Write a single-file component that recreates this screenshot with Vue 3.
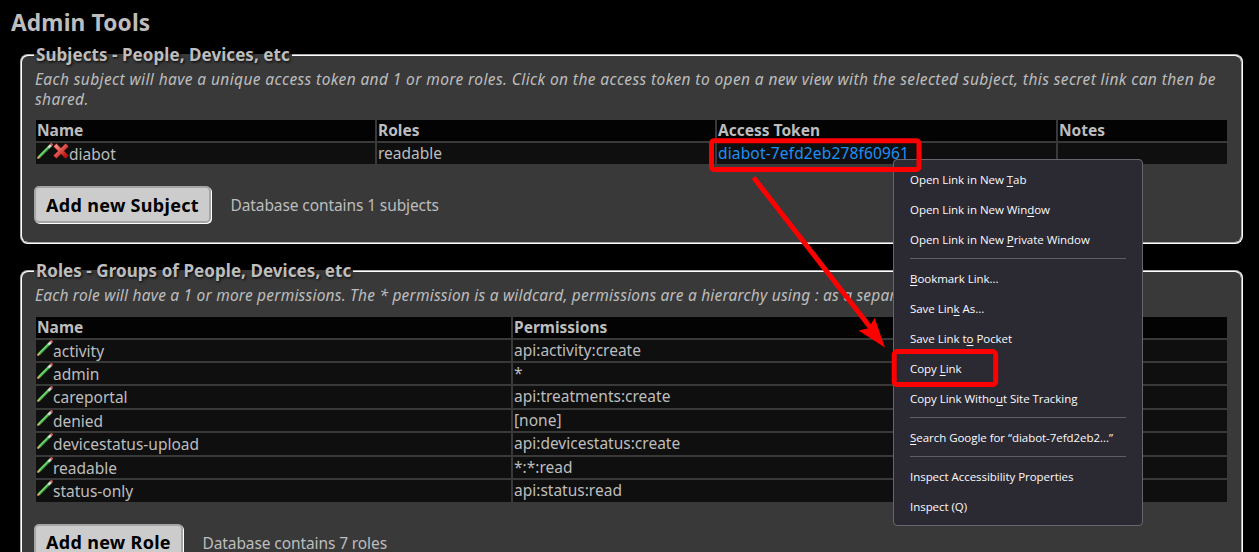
<script setup>
const subjectCols = ['Name', 'Roles', 'Access Token', 'Notes']
const roles = [
  ['activity', 'api:activity:create'],
  ['admin', '*'],
  ['careportal', 'api:treatments:create'],
  ['denied', '[none]'],
  ['devicestatus-upload', 'api:devicestatus:create'],
  ['readable', '*:*:read'],
  ['status-only', 'api:status:read'],
]
// Each menu label is [before, access key, after].
const menu = [
  [
    ['Open Link in New ', 'T', 'ab'],
    ['Open Link in New Win', 'd', 'ow'],
    ['Open Link in New ', 'P', 'rivate Window'],
  ],
  [
    ['', 'B', 'ookmark Link...'],
    ['Save Lin', 'k', ' As...'],
    ['Save Link t', 'o', ' Pocket'],
    ['Copy ', 'L', 'ink'],
    ['Copy Link Witho', 'u', 't Site Tracking'],
  ],
  [['', 'S', 'earch Google for “diabot-7efd2eb2...”']],
  [
    ['Inspect Accessibility Properties', '', ''],
    ['Inspect (Q)', '', ''],
  ],
]
</script>

<template>
  <div class="page">
    <svg class="defs" width="0" height="0">
      <defs>
        <linearGradient id="xg" x1="0" y1="0" x2="1" y2="1">
          <stop offset="0" stop-color="#f08a80" />
          <stop offset="1" stop-color="#c01410" />
        </linearGradient>
        <symbol id="pencil" viewBox="0 0 16 16">
          <path d="M1.4 14.6L14.2 1.8" stroke="#1d5c1d" stroke-width="3.3" />
          <path d="M2.4 13.6L12.2 3.8" stroke="#4cb850" stroke-width="2.2" />
          <path d="M2.2 13.2L11.8 3.6" stroke="#9be894" stroke-width="1" />
          <path d="M11.4 4.6L14.2 1.8" stroke="#dcd8e0" stroke-width="2.6" />
          <path d="M13.9 2.1L15.4 0.6" stroke="#d0554c" stroke-width="2.8" />
          <path d="M0.5 15.5L2.8 13.2" stroke="#e0b070" stroke-width="1.8" />
        </symbol>
        <symbol id="cross" viewBox="0 0 16 16">
          <path d="M3.4 3.4L12.6 12.6M12.6 3.4L3.4 12.6" stroke="#8c1812" stroke-width="4.6" stroke-linecap="square" />
          <path d="M3.4 3.4L12.6 12.6M12.6 3.4L3.4 12.6" stroke="url(#xg)" stroke-width="3.6" stroke-linecap="square" />
        </symbol>
      </defs>
    </svg>

    <h1>Admin Tools</h1>

    <fieldset class="subjects">
      <legend>Subjects - People, Devices, etc</legend>
      <p class="intro wide">
        Each subject will have a unique access token and 1 or more roles. Click on the access token to open a new view with the selected subject, this secret link can then be<br />shared.
      </p>
      <div class="grid four">
        <div v-for="c in subjectCols" :key="c" class="head">{{ c }}</div>
        <div class="cell name">
          <svg class="icon"><use href="#pencil" /></svg><svg class="icon"><use href="#cross" /></svg><span>diabot</span>
        </div>
        <div class="cell">readable</div>
        <div class="cell"><a class="token">diabot-7efd2eb278f60961</a></div>
        <div class="cell"></div>
      </div>
      <div class="actions">
        <button class="b1">Add new Subject</button>
        <span>Database contains 1 subjects</span>
      </div>
    </fieldset>

    <fieldset class="roles">
      <legend>Roles - Groups of People, Devices, etc</legend>
      <p class="intro clip">
        Each role will have a 1 or more permissions. The * permission is a wildcard, permissions are a hierarchy using : as a separ
      </p>
      <div class="grid two">
        <div class="head">Name</div>
        <div class="head">Permissions</div>
        <template v-for="r in roles" :key="r[0]">
          <div class="cell name"><svg class="icon"><use href="#pencil" /></svg><span>{{ r[0] }}</span></div>
          <div class="cell">{{ r[1] }}</div>
        </template>
      </div>
      <div class="actions">
        <button class="b2">Add new Role</button>
        <span>Database contains 7 roles</span>
      </div>
    </fieldset>

    <nav class="menu">
      <ul v-for="(group, i) in menu" :key="i">
        <li v-for="(m, j) in group" :key="j">{{ m[0] }}<u v-if="m[1]">{{ m[1] }}</u>{{ m[2] }}</li>
      </ul>
    </nav>

    <svg class="marks" width="1259" height="552" fill="none" stroke="#f00">
      <rect x="711.5" y="140.7" width="207.5" height="28.8" rx="2.5" stroke-width="5" />
      <rect x="894.2" y="351.6" width="101.5" height="33" rx="3" stroke-width="5" />
      <path d="M753.6 177.5L870 327" stroke-width="5" />
      <path d="M885 347.5L858.5 330.5L868.5 328.2L874.6 318Z" fill="#f00" stroke="none" />
    </svg>
  </div>
</template>

<style>
body {
  background: #000;
  overflow: hidden;
}
</style>

<style scoped>
.page {
  position: relative;
  box-sizing: border-box;
  width: 1259px;
  height: 552px;
  overflow: hidden;
  padding: 0 16px 0 20px;
  background: #000;
  color: #bdbdbd;
  font: 15.5px/21px "Noto Sans", "Open Sans", sans-serif;
}
.defs {
  position: absolute;
}
h1 {
  margin: 0 0 0 -9px;
  padding-top: 7px;
  height: 38px;
  font-size: 22.7px;
  line-height: 32px;
  font-weight: bold;
  letter-spacing: 0.16px;
}
fieldset {
  box-sizing: border-box;
  min-width: 0;
  margin: 0;
  padding: 0 14px 0 12px;
  border: 2px groove #fff;
  border-radius: 8px;
  background: #393939;
}
.subjects {
  height: 199px;
}
.roles {
  height: 320px;
  margin-top: 17px;
}
legend {
  height: 19px;
  padding: 0 2px;
  font-size: 17px;
  line-height: 19px;
  font-weight: bold;
  letter-spacing: 0.06px;
  text-shadow: 1px 1px 3px #000;
  white-space: nowrap;
}
.intro {
  margin: 6px 0 0 1px;
  font-style: italic;
  line-height: 19.5px;
  letter-spacing: 0.21px;
  white-space: nowrap;
}
.wide {
  letter-spacing: 0.39px;
}
.grid {
  display: grid;
  gap: 2px;
  margin: 11px 0 0 2px;
  width: 1191px;
}
.four {
  grid-template: 21px 21px / 339px 338px 339px 169px;
}
.two {
  grid-template-columns: 475px 714px;
  grid-template-rows: 21px;
  grid-auto-rows: 21.45px;
}
.head {
  padding-left: 1px;
  background: #030303;
  font-weight: bold;
}
.cell {
  padding-left: 1px;
  background: #0f0f0f;
  white-space: nowrap;
  min-height: 0;
}
.two .cell {
  line-height: 21.8px;
}
.name {
  display: flex;
}
.name span {
  padding-top: 1px;
}
.icon {
  width: 16px;
  height: 16px;
  flex: none;
}
.token {
  color: #1e8ff5;
  letter-spacing: 0.15px;
}
.actions {
  display: flex;
  align-items: center;
  gap: 19.5px;
  margin-top: 22px;
  height: 37px;
  letter-spacing: -0.1px;
}
.actions span {
  padding-top: 2px;
}
button {
  box-sizing: border-box;
  height: 37px;
  padding: 0;
  border: 2px solid #a5a5a5;
  border-radius: 5px;
  background: #ccc;
  box-shadow: 1px 1px 0 #fff;
  color: #000;
  font: bold 18px/30px "Noto Sans", "Open Sans", sans-serif;
  letter-spacing: 0.3px;
}
.b1 {
  width: 177px;
}
.b2 {
  width: 149px;
}
.menu {
  position: absolute;
  left: 893px;
  top: 159px;
  box-sizing: border-box;
  width: 250px;
  height: 367px;
  padding: 5px 16px 3px;
  border: 1px solid #67666f;
  border-radius: 4px;
  background: #2b2a33;
  color: #fbfbfe;
  font: 11.5px/30px "Open Sans", "Noto Sans", sans-serif;
  letter-spacing: -0.04px;
}
ul {
  margin: 0;
  padding: 0;
  list-style: none;
}
ul + ul {
  margin-top: 3px;
  padding-top: 5px;
  border-top: 1px solid #5f5e68;
}
li {
  height: 30px;
  white-space: pre;
}
u {
  text-underline-offset: 2px;
}
.marks {
  position: absolute;
  left: 0;
  top: 0;
}
</style>
